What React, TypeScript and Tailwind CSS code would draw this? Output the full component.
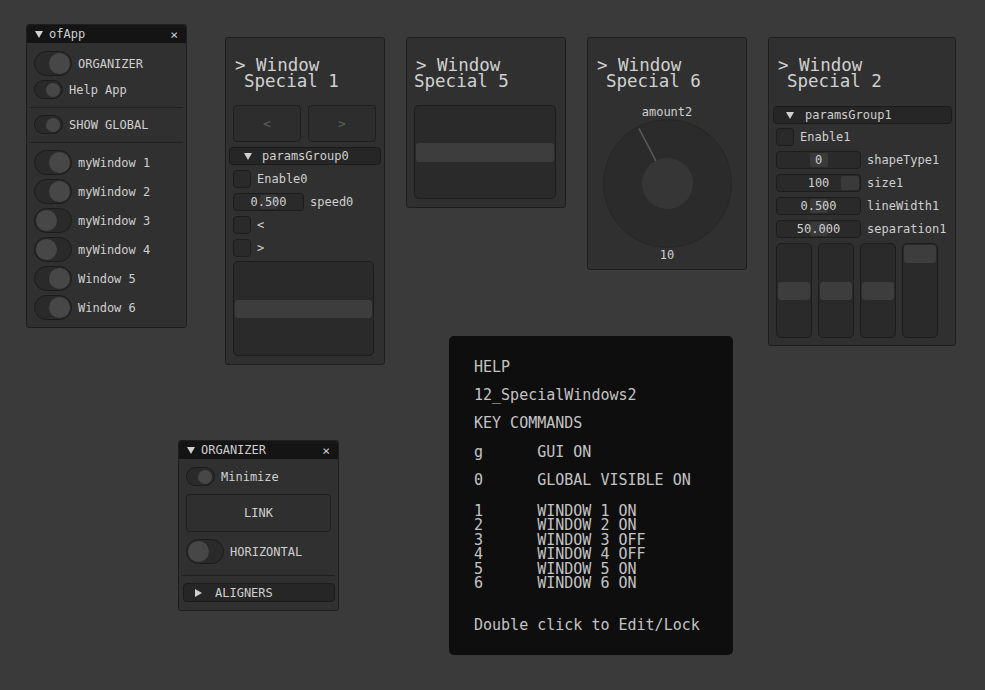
import React from "react";

const FONT = "font-['DejaVu_Sans_Mono','Liberation_Mono',monospace]";

function TriDown({ className = "" }: { className?: string }) {
  return (
    <svg width="8" height="7" viewBox="0 0 8 7" className={className}>
      <polygon points="0,0 8,0 4,7" fill="#d0d0d0" />
    </svg>
  );
}
function TriRight({ className = "" }: { className?: string }) {
  return (
    <svg width="7" height="8" viewBox="0 0 7 8" className={className}>
      <polygon points="0,0 7,4 0,8" fill="#d0d0d0" />
    </svg>
  );
}

function BigToggle({ on }: { on: boolean }) {
  return (
    <div
      className={`w-[38px] h-[25px] rounded-full bg-[#2a2a2a] border border-[#1b1b1b] flex items-center px-[1px] shrink-0 ${
        on ? "justify-end" : "justify-start"
      }`}
    >
      <div className="w-[21px] h-[21px] rounded-full bg-[#474747]" />
    </div>
  );
}
function SmallToggle({ on }: { on: boolean }) {
  return (
    <div
      className={`w-[29px] h-[19px] rounded-full bg-[#2a2a2a] border border-[#1b1b1b] flex items-center px-[2px] shrink-0 ${
        on ? "justify-end" : "justify-start"
      }`}
    >
      <div className="w-[14px] h-[14px] rounded-full bg-[#474747]" />
    </div>
  );
}

function Checkbox() {
  return <div className="w-[18px] h-[18px] rounded-[4px] bg-[#2a2a2a] border border-[#1c1c1c] shrink-0" />;
}

function TitleBar({ label }: { label: string }) {
  return (
    <div className="h-[18px] bg-[#141414] flex items-center pl-[8px] pr-[8px] rounded-t-[3px]">
      <TriDown />
      <span className="ml-[6px] text-[12px] leading-none text-[#cfcfcf]">{label}</span>
      <span className="ml-auto text-[13px] leading-none text-[#cfcfcf]">×</span>
    </div>
  );
}

function SpecialTitle({ n, wrap }: { n: number; wrap: string }) {
  return (
    <div className={`text-[17.5px] leading-[16px] text-[#d0d0d0] pt-[19px] whitespace-pre ${wrap}`}>
      {`> Window\nSpecial ${n}`}
    </div>
  );
}

function Window({
  x,
  y,
  w,
  h,
  children,
}: {
  x: number;
  y: number;
  w: number;
  h: number;
  children: React.ReactNode;
}) {
  return (
    <div
      className="absolute bg-[#303030] border border-[#1e1e1e] rounded-[3px] flex flex-col"
      style={{ left: x, top: y, width: w, height: h }}
    >
      {children}
    </div>
  );
}

function Header({ label, open, tri, text }: { label: string; open: boolean; tri: string; text: string }) {
  return (
    <div className="h-[18px] rounded-[4px] bg-[#262626] border border-[#1b1b1b] flex items-center relative">
      <div className={`absolute ${tri} top-[5px]`}>{open ? <TriDown /> : <TriRight />}</div>
      <span className={`absolute ${text} text-[12px] leading-none text-[#cfcfcf]`}>{label}</span>
    </div>
  );
}

function Sep() {
  return <div className="h-px bg-[#1f1f1f] mx-[3px]" />;
}

function VSlider({ grabTop }: { grabTop: string }) {
  return (
    <div className="w-[36px] h-[95px] rounded-[5px] bg-[#2a2a2a] border border-[#1c1c1c] relative">
      <div className={`absolute left-[1px] right-[1px] h-[18px] rounded-[3px] bg-[#3d3d3d] ${grabTop}`} />
    </div>
  );
}

function NumInput({ value, grab }: { value: string; grab: string }) {
  return (
    <div className="w-[85px] h-[18px] rounded-[4px] bg-[#2a2a2a] border border-[#1c1c1c] relative flex items-center justify-center shrink-0">
      <div className={`absolute top-[1px] bottom-[1px] w-[18px] rounded-[2px] bg-[#3a3a3a] ${grab}`} />
      <span className="relative text-[12px] leading-none text-[#cfcfcf]">{value}</span>
    </div>
  );
}

const WINDOW_LINES = [
  "1      WINDOW 1 ON",
  "2      WINDOW 2 ON",
  "3      WINDOW 3 OFF",
  "4      WINDOW 4 OFF",
  "5      WINDOW 5 ON",
  "6      WINDOW 6 ON",
].join("\n");

export default function App() {
  const label = "text-[12px] leading-none text-[#cfcfcf]";
  return (
    <div className={`relative w-[985px] h-[690px] bg-[#3a3a3a] overflow-hidden ${FONT}`}>
      {/* ofApp */}
      <Window x={26} y={24} w={161} h={304}>
        <TitleBar label="ofApp" />
        <div className="flex flex-col pl-[7px] pt-[8px]">
          <div className="flex items-center h-[25px]">
            <BigToggle on />
            <span className={`ml-[6px] ${label}`}>ORGANIZER</span>
          </div>
          <div className="flex items-center h-[19px] mt-[4px]">
            <SmallToggle on />
            <span className={`ml-[6px] ${label}`}>Help App</span>
          </div>
        </div>
        <div className="mt-[8px]">
          <Sep />
        </div>
        <div className="flex items-center h-[19px] mt-[7px] pl-[7px]">
          <SmallToggle on />
          <span className={`ml-[6px] ${label}`}>SHOW GLOBAL</span>
        </div>
        <div className="mt-[8px]">
          <Sep />
        </div>
        <div className="flex flex-col gap-[4px] pl-[7px] mt-[7px]">
          {[
            ["myWindow 1", true],
            ["myWindow 2", true],
            ["myWindow 3", false],
            ["myWindow 4", false],
            ["Window 5", true],
            ["Window 6", true],
          ].map(([t, on]) => (
            <div key={t as string} className="flex items-center h-[25px]">
              <BigToggle on={on as boolean} />
              <span className={`ml-[6px] ${label}`}>{t as string}</span>
            </div>
          ))}
        </div>
      </Window>

      {/* Window Special 1 */}
      <Window x={225} y={37} w={160} h={328}>
        <SpecialTitle n={1} wrap="pl-[18px] -indent-[9px]" />
        <div className="flex gap-[7px] pl-[7px] mt-[16px]">
          {["<", ">"].map((c) => (
            <div
              key={c}
              className="w-[68px] h-[37px] rounded-[4px] bg-[#2d2d2d] border border-[#1e1e1e] flex items-center justify-center text-[13px] text-[#5e5e5e]"
            >
              {c}
            </div>
          ))}
        </div>
        <div className="mt-[5px] px-[3px]">
          <Header label="paramsGroup0" open tri="left-[14px]" text="left-[32px]" />
        </div>
        <div className="flex flex-col gap-[5px] pl-[7px] mt-[5px]">
          <div className="flex items-center">
            <Checkbox />
            <span className={`ml-[6px] ${label}`}>Enable0</span>
          </div>
          <div className="flex items-center">
            <div className="w-[71px] h-[18px] rounded-[4px] bg-[#2a2a2a] border border-[#1c1c1c] relative flex items-center justify-center">
              <div className="absolute top-[1px] bottom-[1px] left-[26px] w-[18px] rounded-[2px] bg-[#383838]" />
              <span className="relative text-[12px] leading-none text-[#cfcfcf]">0.500</span>
            </div>
            <span className={`ml-[6px] ${label}`}>speed0</span>
          </div>
          <div className="flex items-center">
            <Checkbox />
            <span className={`ml-[6px] ${label}`}>&lt;</span>
          </div>
          <div className="flex items-center">
            <Checkbox />
            <span className={`ml-[6px] ${label}`}>&gt;</span>
          </div>
        </div>
        <div className="ml-[7px] mt-[4px] w-[141px] h-[95px] rounded-[5px] bg-[#2a2a2a] border border-[#1c1c1c] relative">
          <div className="absolute left-[1px] right-[1px] top-[38px] h-[18px] rounded-[3px] bg-[#3d3d3d]" />
        </div>
      </Window>

      {/* Window Special 5 */}
      <Window x={406} y={37} w={160} h={171}>
        <SpecialTitle n={5} wrap="pl-[7px] indent-[2px]" />
        <div className="ml-[7px] mt-[16px] w-[142px] h-[94px] rounded-[5px] bg-[#2a2a2a] border border-[#1c1c1c] relative">
          <div className="absolute left-[1px] right-[1px] top-[37px] h-[19px] rounded-[3px] bg-[#3d3d3d]" />
        </div>
      </Window>

      {/* Window Special 6 */}
      <Window x={587} y={37} w={160} h={233}>
        <SpecialTitle n={6} wrap="pl-[18px] -indent-[9px]" />
        <div className={`text-center mt-[16px] ${label} h-[14px] flex items-center justify-center`}>amount2</div>
        <div className="flex justify-center">
          <svg width="131" height="130" viewBox="0 0 131 130">
            <circle cx="65.5" cy="64.5" r="64" fill="#2b2b2b" stroke="#262626" strokeWidth="1" />
            <circle cx="65.5" cy="64.5" r="25.5" fill="#363636" />
            <line x1="37" y1="9.5" x2="54" y2="42" stroke="#5a5a5a" strokeWidth="1.6" />
          </svg>
        </div>
        <div className={`text-center -mt-[1px] ${label} h-[14px] flex items-center justify-center`}>10</div>
      </Window>

      {/* Window Special 2 */}
      <Window x={768} y={37} w={188} h={309}>
        <SpecialTitle n={2} wrap="pl-[18px] -indent-[9px]" />
        <div className="mt-[17px] pl-[4px] pr-[3px]">
          <Header label="paramsGroup1" open tri="left-[12px]" text="left-[31px]" />
        </div>
        <div className="flex flex-col gap-[5px] pl-[7px] mt-[4px]">
          <div className="flex items-center">
            <Checkbox />
            <span className={`ml-[6px] ${label}`}>Enable1</span>
          </div>
          <div className="flex items-center">
            <NumInput value="0" grab="left-[33px]" />
            <span className={`ml-[6px] ${label}`}>shapeType1</span>
          </div>
          <div className="flex items-center">
            <NumInput value="100" grab="left-[64px]" />
            <span className={`ml-[6px] ${label}`}>size1</span>
          </div>
          <div className="flex items-center">
            <NumInput value="0.500" grab="left-[33px]" />
            <span className={`ml-[6px] ${label}`}>lineWidth1</span>
          </div>
          <div className="flex items-center">
            <NumInput value="50.000" grab="left-[33px]" />
            <span className={`ml-[6px] ${label}`}>separation1</span>
          </div>
          <div className="flex gap-[6px]">
            <VSlider grabTop="top-[38px]" />
            <VSlider grabTop="top-[38px]" />
            <VSlider grabTop="top-[38px]" />
            <VSlider grabTop="top-[1px]" />
          </div>
        </div>
      </Window>

      {/* ORGANIZER */}
      <Window x={178} y={440} w={161} h={171}>
        <TitleBar label="ORGANIZER" />
        <div className="flex flex-col pl-[7px] pr-[7px] pt-[8px]">
          <div className="flex items-center h-[19px]">
            <SmallToggle on />
            <span className={`ml-[6px] ${label}`}>Minimize</span>
          </div>
          <div className="mt-[8px] h-[38px] rounded-[4px] bg-[#2f2f2f] border border-[#1e1e1e] flex items-center justify-center">
            <span className={label}>LINK</span>
          </div>
          <div className="flex items-center h-[25px] mt-[7px]">
            <BigToggle on={false} />
            <span className={`ml-[6px] ${label}`}>HORIZONTAL</span>
          </div>
        </div>
        <div className="mt-[11px]">
          <Sep />
        </div>
        <div className="mt-[7px] pl-[4px] pr-[3px]">
          <div className="h-[19px] rounded-[4px] bg-[#262626] border border-[#1b1b1b] relative">
            <div className="absolute left-[11px] top-[5px]">
              <TriRight />
            </div>
            <span className={`absolute left-[31px] top-[3px] ${label}`}>ALIGNERS</span>
          </div>
        </div>
      </Window>

      {/* HELP */}
      <div className="absolute left-[449px] top-[336px] w-[284px] h-[319px] bg-[#0e0e0e] rounded-[5px] text-[15px] text-[#c4c4c4] pl-[25px]">
        <div className="pt-[23px] leading-[16px] whitespace-pre">
          <div>HELP</div>
          <div className="mt-[12px]">12_SpecialWindows2</div>
          <div className="mt-[12px]">KEY COMMANDS</div>
          <div className="mt-[13px]">{"g      GUI ON"}</div>
          <div className="mt-[12px]">{"0      GLOBAL VISIBLE ON"}</div>
          <div className="mt-[16px] leading-[14.4px]">{WINDOW_LINES}</div>
          <div className="mt-[27px]">Double click to Edit/Lock</div>
        </div>
      </div>
    </div>
  );
}
